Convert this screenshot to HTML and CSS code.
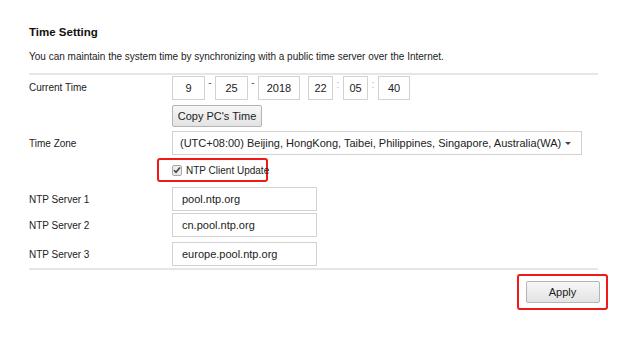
FILE: index.html
```html
<!DOCTYPE html>
<html lang="en">
<head>
  <meta charset="UTF-8" />
  <title>Time Setting</title>
  <link rel="stylesheet" href="styles.css">
</head>
<body>
  <div class="page">
    <h2 class="title">Time Setting</h2>
    <p class="desc">You can maintain the system time by synchronizing with a public time server over the Internet.</p>

    <div class="section">
      <div class="row row-top">
        <div class="label">Current Time</div>
        <div class="field">
          <div class="time-line">
            <input class="box w32" type="text" value="9" />
            <span class="sep">-</span>
            <input class="box w32" type="text" value="25" />
            <span class="sep">-</span>
            <input class="box w41" type="text" value="2018" />
            <input class="box w25 gap-left" type="text" value="22" />
            <span class="sep colon">:</span>
            <input class="box w25" type="text" value="05" />
            <span class="sep colon">:</span>
            <input class="box w31" type="text" value="40" />
          </div>
          <button class="btn copy-btn">Copy PC's Time</button>
        </div>
      </div>

      <div class="row zone-row">
        <div class="label">Time Zone</div>
        <div class="select">
          <span>(UTC+08:00) Beijing, HongKong, Taibei, Philippines, Singapore, Australia(WA)</span>
          <span class="caret"></span>
        </div>
      </div>

      <div class="row check-row">
        <div class="label"></div>
        <label class="check highlight">
          <span class="checkbox">
            <svg width="8" height="8" viewBox="0 0 8 8"><path d="M1 4.2 L3 6.2 L7 1.5" fill="none" stroke="#444" stroke-width="1.6"/></svg>
          </span>
          NTP Client Update
        </label>
      </div>

      <div class="row server-row">
        <div class="label">NTP Server 1</div>
        <input class="box server" type="text" value="pool.ntp.org" />
      </div>
      <div class="row server-row">
        <div class="label">NTP Server 2</div>
        <input class="box server" type="text" value="cn.pool.ntp.org" />
      </div>
      <div class="row server-row">
        <div class="label">NTP Server 3</div>
        <input class="box server" type="text" value="europe.pool.ntp.org" />
      </div>
    </div>

    <div class="actions">
      <div class="apply-wrap highlight">
        <button class="btn apply-btn">Apply</button>
      </div>
    </div>
  </div>
</body>
</html>
```

FILE: styles.css
```css
body {
  margin: 0;
  background: #fff;
  font-family: 'Liberation Sans', Arial, sans-serif;
  color: #222;
}

.page {
  width: 569px;
  padding: 23px 0 0 29px;
}

.title {
  margin: 0;
  font-size: 11.5px;
  font-weight: bold;
  line-height: 18px;
  color: #111;
}

.desc {
  margin: 9px 0 0;
  font-size: 10px;
  line-height: 13px;
  color: #222;
}

.section {
  margin-top: 10px;
  border-top: 2px solid #e6e6e6;
  border-bottom: 2px solid #e6e6e6;
  padding: 1px 0 2px;
}

.row {
  display: flex;
  align-items: center;
}

.row-top {
  align-items: flex-start;
}

.row-top .label {
  line-height: 24px;
}

.label {
  width: 143px;
  flex: none;
  font-size: 10px;
  color: #222;
}

.field {
  display: flex;
  flex-direction: column;
  align-items: flex-start;
}

.time-line {
  display: flex;
  align-items: flex-start;
}

.box {
  box-sizing: border-box;
  height: 24px;
  border: 1px solid #d2d2d2;
  background: #fff;
  font-family: inherit;
  font-size: 11px;
  color: #222;
  padding: 0;
  margin: 0;
  text-align: center;
  outline: none;
}

.w32 { width: 33px; }
.w41 { width: 42px; }
.w25 { width: 25px; }
.w31 { width: 32px; }
.gap-left { margin-left: 8px; }

.sep {
  width: 10px;
  text-align: center;
  font-size: 10px;
  line-height: 14px;
  color: #555;
}

.colon {
  color: #b9a7d0;
  line-height: 18px;
}

.btn {
  font-family: inherit;
  font-size: 11px;
  color: #222;
  background: linear-gradient(#f7f7f7, #e3e3e3);
  border: 1px solid #b4b4b4;
  border-radius: 2px;
  cursor: pointer;
}

.copy-btn {
  margin-top: 5px;
  height: 22px;
  width: 90px;
  padding: 0;
}

.zone-row {
  margin-top: 4px;
}

.select {
  box-sizing: border-box;
  width: 410px;
  height: 24px;
  border: 1px solid #d2d2d2;
  display: flex;
  align-items: center;
  justify-content: space-between;
  padding: 0 10px 0 7px;
  font-size: 11px;
  white-space: nowrap;
  color: #222;
}

.caret {
  width: 0;
  height: 0;
  border-left: 3px solid transparent;
  border-right: 3px solid transparent;
  border-top: 3px solid #444;
}

.highlight {
  border: 2px solid #f01818;
  border-radius: 3px;
}

.check-row {
  margin-top: 3px;
}

.check-row .label {
  width: 128px;
}

.check {
  box-sizing: border-box;
  height: 24px;
  width: 111px;
  display: flex;
  align-items: center;
  padding-left: 13px;
  font-size: 10px;
  white-space: nowrap;
  color: #222;
}

.checkbox {
  width: 9px;
  height: 9px;
  border: 1px solid #a8a8a8;
  border-radius: 2px;
  background: #ececec;
  margin-right: 4px;
  display: flex;
  align-items: center;
  justify-content: center;
}

.server-row {
  margin-top: 5px;
}

.server-row + .server-row {
  margin-top: 2px;
}

.server-row:last-child {
  margin-top: 5px;
}

.server {
  width: 145px;
  text-align: left;
  padding-left: 9px;
}

.actions {
  display: flex;
  justify-content: flex-end;
  margin-top: 4px;
}

.apply-wrap {
  box-sizing: border-box;
  width: 91px;
  height: 36px;
  margin-right: -10px;
  display: flex;
  align-items: center;
  justify-content: center;
}

.apply-btn {
  width: 74px;
  height: 22px;
  padding: 0;
}
```
